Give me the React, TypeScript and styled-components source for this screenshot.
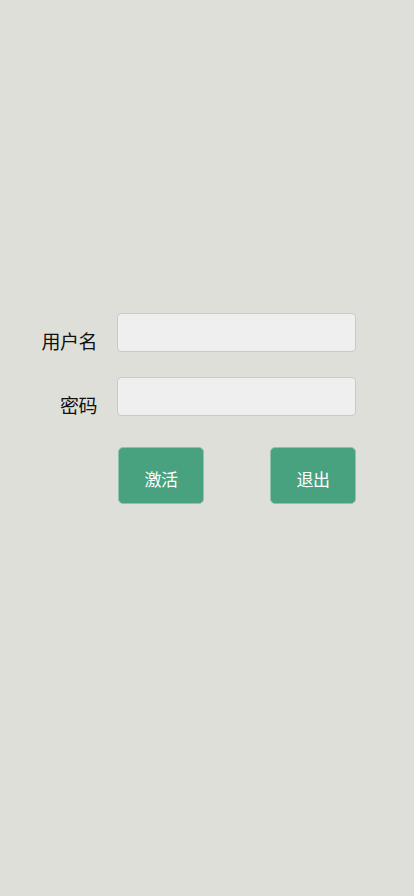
import styled, { createGlobalStyle } from 'styled-components';

const GlobalStyle = createGlobalStyle`
  html, body {
    margin: 0;
    padding: 0;
    background: #dfdfda;
  }
  body {
    font-family: "Noto Sans CJK SC", "Noto Sans", sans-serif;
  }
`;

export default function App() {
  return (
    <>
      <GlobalStyle />
      <PageStyle>
        <FormStyle>
          <LabelStyle>用户名</LabelStyle>
          <InputStyle type='text' />

          <LabelStyle>密码</LabelStyle>
          <InputStyle type='password' />

          <span />
          <ButtonRowStyle>
            <ButtonStyle>激活</ButtonStyle>
            <ButtonStyle>退出</ButtonStyle>
          </ButtonRowStyle>
        </FormStyle>
      </PageStyle>
    </>
  );
}

const PageStyle = styled.div`
  min-height: 896px;
  padding-top: 313px;
  box-sizing: border-box;
`;

const FormStyle = styled.div`
  display: grid;
  grid-template-columns: 97px 239px;
  column-gap: 20px;
  row-gap: 25px;
  align-items: start;
`;

const LabelStyle = styled.label`
  margin-top: 18px;
  text-align: right;
  font-size: 19px;
  line-height: 20px;
  letter-spacing: -0.5px;
  color: #111;
`;

const InputStyle = styled.input`
  box-sizing: border-box;
  width: 239px;
  height: 39px;
  margin: 0;
  padding: 0 10px;
  border: 1px solid #c9c9c6;
  border-radius: 4px;
  background: #efefef;
  font-size: 16px;
  outline: none;
`;

const ButtonRowStyle = styled.div`
  display: flex;
  justify-content: space-between;
  padding-left: 1px;
  margin-top: 6px;
`;

const ButtonStyle = styled.button`
  width: 86px;
  height: 57px;
  border: 1px solid #8fc2ad;
  border-radius: 5px;
  background: #48a27f;
  color: #fff;
  font-family: "Noto Sans CJK SC", "Noto Sans", sans-serif;
  font-size: 17px;
  letter-spacing: -0.5px;
  padding: 6px 0 0;
  cursor: pointer;
`;
